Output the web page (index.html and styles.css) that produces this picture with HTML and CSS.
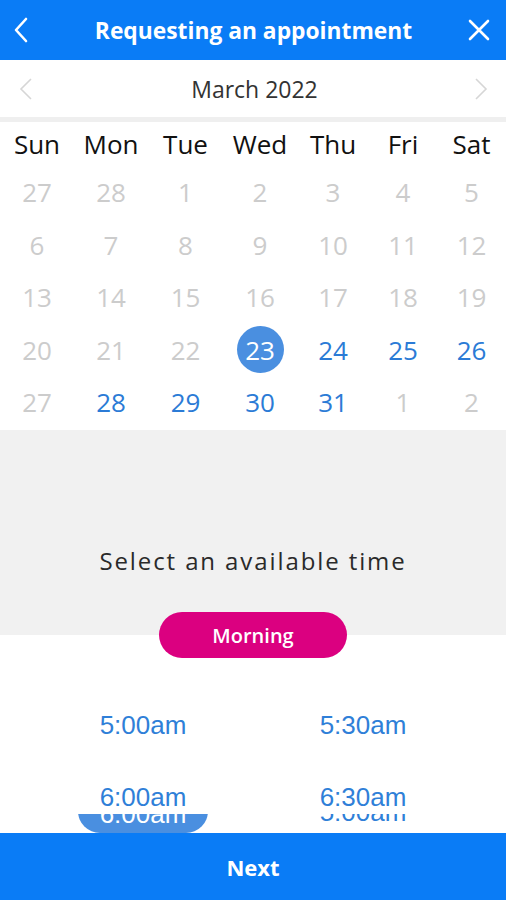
FILE: index.html
```html
<!DOCTYPE html>
<html>
<head>
<meta charset="utf-8">
<link rel="stylesheet" href="styles.css">
</head>
<body>
<div class="screen">
  <header class="topbar">
    <svg class="top-icon" width="20" height="26" viewBox="0 0 20 26"><polyline points="15,2 5,13 15,24" fill="none" stroke="#fff" stroke-width="2.6" stroke-linecap="round" stroke-linejoin="round"/></svg>
    <h1 class="title">Requesting an appointment</h1>
    <svg class="top-icon" width="24" height="24" viewBox="0 0 24 24"><path d="M3 3 L21 21 M21 3 L3 21" fill="none" stroke="#fff" stroke-width="2.6" stroke-linecap="round"/></svg>
  </header>

  <div class="month">
    <svg width="14" height="22" viewBox="0 0 14 22"><polyline points="12,1 2,11 12,21" fill="none" stroke="#d6d6d6" stroke-width="1.6"/></svg>
    <span class="month-name">March 2022</span>
    <svg width="14" height="22" viewBox="0 0 14 22"><polyline points="2,1 12,11 2,21" fill="none" stroke="#d6d6d6" stroke-width="1.6"/></svg>
  </div>

  <div class="calendar">
    <div class="dow">Sun</div><div class="dow">Mon</div><div class="dow">Tue</div><div class="dow">Wed</div><div class="dow">Thu</div><div class="dow">Fri</div><div class="dow">Sat</div>

    <div class="d off">27</div><div class="d off">28</div><div class="d off">1</div><div class="d off">2</div><div class="d off">3</div><div class="d off">4</div><div class="d off">5</div>
    <div class="d off">6</div><div class="d off">7</div><div class="d off">8</div><div class="d off">9</div><div class="d off">10</div><div class="d off">11</div><div class="d off">12</div>
    <div class="d off">13</div><div class="d off">14</div><div class="d off">15</div><div class="d off">16</div><div class="d off">17</div><div class="d off">18</div><div class="d off">19</div>
    <div class="d off">20</div><div class="d off">21</div><div class="d off">22</div><div class="d"><span class="sel">23</span></div><div class="d on">24</div><div class="d on">25</div><div class="d on">26</div>
    <div class="d off">27</div><div class="d on">28</div><div class="d on">29</div><div class="d on">30</div><div class="d on">31</div><div class="d off">1</div><div class="d off">2</div>
  </div>

  <section class="prompt">
    <p class="prompt-text">Select an available time</p>
  </section>
  <div class="pill-wrap"><span class="period">Morning</span></div>

  <div class="times">
    <div class="slot">5:00am</div><div class="slot">5:30am</div>
    <div class="slot">6:00am</div><div class="slot">6:30am</div>
  </div>
  <div class="peek">
    <div class="peek-cell"><span class="peek-pill">6:00am</span></div>
    <div class="peek-cell"><span class="peek-text">5:00am</span></div>
  </div>

  <footer class="next">Next</footer>
</div>
</body>
</html>
```

FILE: styles.css
```css
html, body {
  margin: 0;
  padding: 0;
  background: #fff;
}
.screen {
  width: 506px;
  height: 900px;
  display: flex;
  flex-direction: column;
  overflow: hidden;
  font-family: "Open Sans", "Noto Sans", sans-serif;
}
.topbar {
  height: 60px;
  flex: none;
  background: #0a7cf6;
  display: flex;
  align-items: center;
  justify-content: space-between;
  padding: 0 15px 0 11px;
  box-sizing: border-box;
}
.title {
  margin: 0 0 0 9px;
  color: #fff;
  font-size: 22.8px;
  font-weight: 700;
  letter-spacing: 0;
}
.top-icon { display: block; }
.month {
  height: 57px;
  flex: none;
  display: flex;
  align-items: center;
  justify-content: space-between;
  padding: 0 18px 0 19px;
  border-bottom: 5px solid #efefef;
}
.month-name {
  font-size: 23px;
  color: #333;
  padding-left: 2px;
}
.month svg { display: block; }
.calendar {
  flex: none;
  display: grid;
  grid-template-columns: 74px 74px 75px 74px 72px 68px 69px;
  grid-template-rows: 44px repeat(5, 52.5px);
  padding-bottom: 1.5px;
}
.dow {
  display: flex;
  align-items: center;
  justify-content: center;
  font-size: 26px;
  color: #111;
}
.d {
  display: flex;
  align-items: center;
  justify-content: center;
  font-size: 26px;
}
.off { color: #cccccc; }
.on { color: #2b7bd6; }
.sel {
  width: 47px;
  height: 47px;
  border-radius: 50%;
  background: #4a8fe0;
  color: #fff;
  display: flex;
  align-items: center;
  justify-content: center;
}
.prompt {
  height: 205px;
  flex: none;
  background: #f1f1f1;
  display: flex;
  flex-direction: column;
  justify-content: flex-end;
  align-items: center;
  padding-bottom: 59px;
  box-sizing: border-box;
}
.prompt-text {
  margin: 0;
  font-size: 24px;
  line-height: 30px;
  letter-spacing: 1.9px;
  color: #2a2a2a;
}
.pill-wrap {
  flex: none;
  display: flex;
  justify-content: center;
  margin-top: -23px;
}
.period {
  width: 188px;
  height: 46px;
  border-radius: 23px;
  background: #db0080;
  color: #fff;
  font-size: 20px;
  font-weight: 600;
  display: flex;
  align-items: center;
  justify-content: center;
}
.times {
  flex: none;
  display: grid;
  grid-template-columns: 286px 154px;
  grid-auto-rows: 30px;
  row-gap: 42px;
  padding-top: 52px;
}
.slot, .peek-text {
  font-family: "Liberation Sans", Arial, sans-serif;
  font-size: 26px;
  line-height: 30px;
  color: #2f7fd8;
  text-align: center;
}
.peek {
  flex: none;
  height: 19px;
  margin-top: 2px;
  overflow: hidden;
  display: grid;
  grid-template-columns: 286px 154px;
  align-items: end;
}
.peek-cell {
  display: flex;
  justify-content: center;
  align-items: flex-end;
  height: 19px;
}
.peek-pill {
  width: 130px;
  height: 44px;
  flex: none;
  border-radius: 22px;
  background: #4a8fe0;
  color: #fff;
  font-family: "Liberation Sans", Arial, sans-serif;
  font-size: 26px;
  line-height: 30px;
  display: flex;
  align-items: flex-end;
  justify-content: center;
  padding-bottom: 4px;
  box-sizing: border-box;
}
.peek-text {
  display: block;
  padding-bottom: 6px;
  flex: none;
}
.next {
  flex: 1;
  background: #0a7cf6;
  color: #fff;
  font-size: 22px;
  font-weight: 700;
  display: flex;
  align-items: center;
  justify-content: center;
}
```
